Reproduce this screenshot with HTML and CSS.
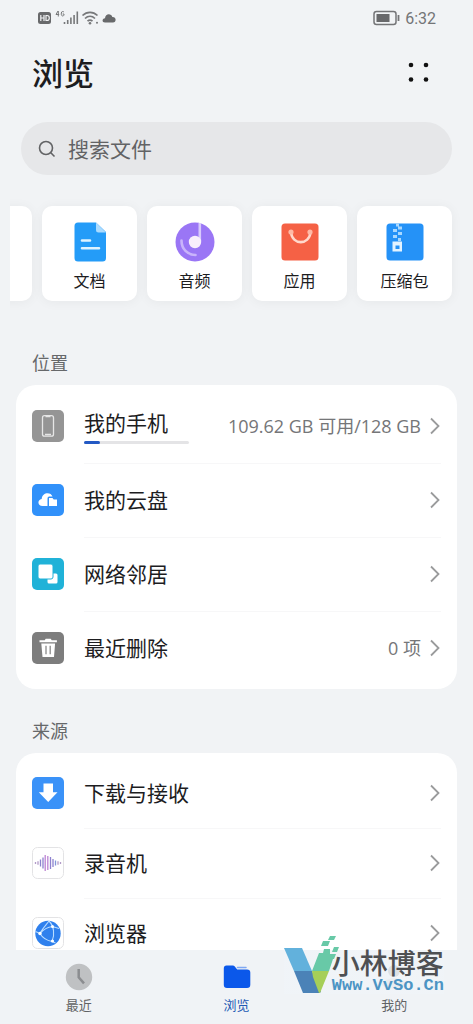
FILE: index.html
```html
<!DOCTYPE html>
<html lang="zh-CN">
<head>
<meta charset="utf-8">
<meta name="viewport" content="width=device-width, initial-scale=1">
<title>浏览</title>
<link rel="stylesheet" href="styles.css">
</head>
<body>
<svg class="defs" aria-hidden="true">
  <symbol id="chevron" viewBox="0 0 12 20"><path d="M2 2.500 9.500 10 2 17.500" fill="none" stroke="#9a9b9c" stroke-width="1.800"/></symbol>
</svg>
<div class="app">
  <main class="content">
    <div class="status">
      <div class="status-left">
        <svg width="80" height="18" viewBox="0 0 80 18" aria-hidden="true">
          <rect x="1" y="3" width="13" height="12" rx="2.500" fill="#68696b"/>
          <path d="M3.800 6v6M7 6v6M3.800 9H7M9 6.500v5h1c1.700 0 2.300-1 2.300-2.500S11.700 6.500 10 6.500z" fill="none" stroke="#f2f3f5" stroke-width="1.200"/>
          <path d="M21 2l-2 3.500h3.200M21.300 2v5.500M27 3.200c-.4-.8-2.500-1.200-2.700.8v1.500c.2 2 2.700 1.800 2.700.2V5h-1.300" fill="none" stroke="#77787a" stroke-width="1"/>
          <path d="M27.500 15v-2M30.700 15v-4M33.900 15V8.500M37.100 15V6M40.300 15V2.500" stroke="#77787a" stroke-width="1.600"/>
          <g fill="none" stroke="#77787a" stroke-width="1.700"><path d="M45.500 6.500c4.500-4.200 10.500-4.200 15 0M48 9.500c3-2.800 7-2.800 10 0M50.500 12.200c1.700-1.400 3.300-1.400 5 0"/></g>
          <circle cx="53" cy="14.300" r="1.300" fill="#77787a"/><circle cx="60" cy="13.700" r="1" fill="#77787a"/>
          <path d="M68 13.500c-3.200 0-3.200-4.200 0-4.300.3-5 6.500-5 7.300-1.200 4.300-.3 4.300 5.500.7 5.500z" fill="#68696b"/>
        </svg>
      </div>
      <div class="status-right">
        <svg width="28" height="16" viewBox="0 0 28 16" aria-hidden="true"><rect x="1" y="1.500" width="22" height="13" rx="2.500" fill="none" stroke="#747577" stroke-width="1.500"/><rect x="3.500" y="4" width="13" height="8" fill="#68696b"/><path d="M25.500 5v6" stroke="#747577" stroke-width="1.800"/></svg>
        <span>6:32</span>
      </div>
    </div>
    <header class="header">
      <h1>浏览</h1>
      <button class="more" aria-label="更多"><svg width="24" height="24" viewBox="0 0 24 24"><g fill="#111"><circle cx="5" cy="5" r="2.300"/><circle cx="20" cy="5" r="2.300"/><circle cx="5" cy="19.500" r="2.300"/><circle cx="20" cy="19.500" r="2.300"/></g></svg></button>
    </header>
    <label class="search">
      <svg width="18" height="18" viewBox="0 0 18 18" aria-hidden="true"><circle cx="8" cy="8" r="6.500" fill="none" stroke="#626365" stroke-width="1.600"/><path d="m12.800 12.800 3.700 3.700" stroke="#626365" stroke-width="1.600"/></svg>
      <input type="search" placeholder="搜索文件" aria-label="搜索文件">
    </label>
    <nav class="types" aria-label="文件类型">
      <button class="type" aria-label="视频"></button>
      <button class="type">
        <svg width="40" height="40" viewBox="0 0 40 40"><path d="M7 .500h19L36 10v26q0 3.500-3.500 3.500h-24.500Q4.500 39.500 4.500 36V4Q4.500.500 8 .500z" fill="#249cf8"/><path d="M26 .500V8q0 2.500 2.500 2.500H36z" fill="#aadbff"/><path d="M12 18.500h8M12 26.200h17" stroke="#dff3ff" stroke-width="2.600" stroke-linecap="round"/></svg>
        <span>文档</span>
      </button>
      <button class="type">
        <svg width="40" height="40" viewBox="0 0 40 40"><circle cx="20" cy="20" r="19.500" fill="#9a76f5"/><path d="M6.500 18.500c0 8.500 6 14.500 14 14.500" fill="none" stroke="#c9b4fb" stroke-width="2.600" stroke-linecap="round"/><path d="M24.800 1v18" stroke="#d8c9fc" stroke-width="2.600"/><circle cx="20" cy="20" r="6.200" fill="#f8effc"/></svg>
        <span>音频</span>
      </button>
      <button class="type">
        <svg width="40" height="40" viewBox="0 0 40 40"><rect x="1.500" y="1.500" width="37" height="37" rx="3.500" fill="#f56145"/><path d="M11 10c1 13.500 18.500 13.500 19.500 0" fill="none" stroke="#ffd8cb" stroke-width="2.600"/><circle cx="11" cy="10" r="2.600" fill="#ffb9a5"/><circle cx="30" cy="10" r="2.600" fill="#ffb9a5"/></svg>
        <span>应用</span>
      </button>
      <button class="type">
        <svg width="40" height="40" viewBox="0 0 40 40"><rect x="1.500" y="1.500" width="37" height="37" rx="3.500" fill="#2592f7"/><path d="M11 1.500h3v3h-3zM8 7h4v3H8zM13 4.500h4v3h-4zM13 10h4v3h-4zM8 13h4v3H8zM13 16h3v3h-3z" fill="#a9d8ff"/><path d="M7.500 19.500h9.500v10H7.500zm3 4v3.500h4v-3.500z" fill="#e3f3ff" fill-rule="evenodd"/></svg>
        <span>压缩包</span>
      </button>
    </nav>

    <h2>位置</h2>
    <ul class="list places">
      <li><a class="row" href="#phone">
        <svg class="icon" viewBox="0 0 32 32"><rect width="32" height="32" rx="5" fill="#959595"/><rect x="10.500" y="5.700" width="11" height="20.500" rx="2" fill="none" stroke="#e6e6e6" stroke-width="1.300"/><path d="M13.500 6.500h5M13 24.500h6" stroke="#e6e6e6" stroke-width="1.500"/></svg>
        <span class="name">我的手机<span class="meter"><span class="used"></span></span></span>
        <span class="value">109.62 GB 可用/128 GB</span>
        <svg class="chevron"><use href="#chevron"/></svg></a></li>
      <li><a class="row" href="#cloud">
        <svg class="icon" viewBox="0 0 32 32"><rect width="32" height="32" rx="5" fill="#3191fa"/><path d="M15.500 22h-5c-5 0-5.500-6.300-.8-7C10 8 19 7.500 20.500 12.500h-3.300q-1.700 0-1.700 1.700z" fill="#fff"/><path d="M17 14h3.500l1.200 1.500H25V22h-8z" fill="#fff"/></svg>
        <span class="name">我的云盘</span>
        <svg class="chevron"><use href="#chevron"/></svg></a></li>
      <li><a class="row" href="#network">
        <svg class="icon" viewBox="0 0 32 32"><rect width="32" height="32" rx="5" fill="#20b2d8"/><rect x="15.500" y="15.500" width="10" height="10" rx="1.500" fill="#fff"/><rect x="6" y="6" width="15" height="15" rx="2" fill="#fff" stroke="#20b2d8"/></svg>
        <span class="name">网络邻居</span>
        <svg class="chevron"><use href="#chevron"/></svg></a></li>
      <li><a class="row" href="#deleted">
        <svg class="icon" viewBox="0 0 32 32"><rect width="32" height="32" rx="5" fill="#7d7d7d"/><path d="M7.500 8.300h5.200l1-1.500h5l1 1.500h5.200v2H7.500zM9.300 11.500h13.800L22 25H10.500z" fill="#fff"/><path d="M14 13.800v8.500M18.200 13.800v8.500" stroke="#8b8b8b" stroke-width="1.300"/></svg>
        <span class="name">最近删除</span>
        <span class="value">0 项</span>
        <svg class="chevron"><use href="#chevron"/></svg></a></li>
    </ul>

    <h2>来源</h2>
    <ul class="list sources">
      <li><a class="row" href="#downloads">
        <svg class="icon" viewBox="0 0 32 32"><rect width="32" height="32" rx="5" fill="#3a92f8"/><path d="M11.500 6.500h9.500v8.700h4.500L16.200 25 6.800 15.200h4.700z" fill="#fff"/></svg>
        <span class="name">下载与接收</span>
        <svg class="chevron"><use href="#chevron"/></svg></a></li>
      <li><a class="row" href="#recorder">
        <svg class="icon" viewBox="0 0 32 32"><rect x=".5" y=".5" width="31" height="31" rx="5" fill="#fff" stroke="#e3e3e5"/><g stroke-width="1.300"><path d="M3.500 15v2M6 14.300v3.400M28.500 15v2M26 14.300v3.400" stroke="#b29bc8"/><path d="M8.500 12.500v7M11 10.500v11M18.500 10v12M21 12v8" stroke="#8d82cf"/><path d="M13.200 8v16M15.800 9v14" stroke="#bd83d3"/><path d="M23.500 13.500v5" stroke="#8297d8"/></g></svg>
        <span class="name">录音机</span>
        <svg class="chevron"><use href="#chevron"/></svg></a></li>
      <li><a class="row" href="#browser">
        <svg class="icon" viewBox="0 0 32 32"><rect x=".5" y=".5" width="31" height="31" rx="5" fill="#fff" stroke="#e3e3e5"/><circle cx="16" cy="16.500" r="12.700" fill="#2f80ed"/><g fill="none" stroke="#b9dcff" stroke-width="1.100"><path d="M17 4c-3 4-7 8-9 12.500 2 3.500 7 7 12 8M20.500 9.500C16 10 11 13 8 16.500M17 4c5 5 6 14 3 20.500M3.500 14.500l4.500 2M20.500 9.500l6.500 2M20 24.500l3.500 1.500"/></g><g fill="#fff"><circle cx="8" cy="16.500" r="1.700"/><circle cx="20.500" cy="9.500" r="1.500"/><circle cx="20.500" cy="24" r="1.600"/></g></svg>
        <span class="name">浏览器</span>
        <svg class="chevron"><use href="#chevron"/></svg></a></li>
    </ul>
  </main>

  <nav class="tabs" aria-label="主导航">
    <a class="tab" href="#recent">
      <svg width="28" height="28" viewBox="0 0 28 28"><circle cx="14" cy="14" r="13.200" fill="#bfc1c3"/><path d="M13.700 6v8.300l5.300 6" fill="none" stroke="#8b8d90" stroke-width="2.500"/></svg>
      <span>最近</span></a>
    <a class="tab active" href="#browse">
      <svg width="28" height="28" viewBox="0 0 28 28"><path d="M3.500 2.500h6.300q1.200 0 2 1l2.400 3H24q3.300 0 3.300 3v12.300q0 3.200-3.300 3.200H4q-3.200 0-3.200-3.200V5.500q0-3 2.700-3z" fill="#0b58ea"/><path d="M14.500 4.500H23" stroke="#7fa8f3" stroke-width="1.500" stroke-linecap="round"/></svg>
      <span>浏览</span></a>
    <a class="tab" href="#mine">
      <svg width="28" height="28" viewBox="0 0 28 28"><circle cx="14" cy="8" r="6" fill="#a3a5a8"/><path d="M2 22c2-9 22-9 24 0-5 5-19 5-24 0z" fill="#d5d7da"/></svg>
      <span>我的</span></a>
    <div class="watermark">
      <svg width="56" height="60" viewBox="0 0 56 60" aria-hidden="true">
        <path d="M0 14h18l10 23H10z" fill="#62b1dc"/><path d="M10 37h18l9 21-2 1H19z" fill="#4b82b7"/>
        <path d="M28 37h17L36 59h-1l-6-16z" fill="#a6cf58"/><path d="M28 37l7-18h4l1-4h6v5h6l-2 5h-1l-4 12z" fill="#68c9a7"/>
        <path d="M39 7h7l-2 5h-7zM46 2h6l-2 4h-6zM50 13h5l-2 5h-5z" fill="#68c9a7"/>
      </svg>
      <div class="mark-text"><span class="mark-name">小林博客</span><span class="mark-url">Www.VvSo.Cn</span></div>
    </div>
  </nav>
</div>
</body>
</html>
```
FILE: styles.css
```css
* { box-sizing: border-box; }

body {
  margin: 0;
  background: #f1f3f5;
  color: #1d1d1f;
  font-family: "Noto Sans CJK SC", sans-serif;
}

button {
  border: 0;
  padding: 0;
  font: inherit;
  color: inherit;
}

a { color: inherit; text-decoration: none; }

.defs { display: none; }

.app {
  display: flex;
  flex-direction: column;
  height: 100vh;
}

.content {
  flex: 1;
  min-height: 0;
  overflow: hidden;
}

.status {
  display: flex;
  justify-content: space-between;
  align-items: center;
  height: 36px;
  padding: 0 37px 0 37px;
  color: #747577;
  font-family: Roboto, sans-serif;
  font-size: 16px;
}

.status svg { display: block; }

.status-right {
  display: flex;
  align-items: center;
  gap: 4px;
}

.header {
  display: flex;
  justify-content: space-between;
  align-items: center;
  height: 72px;
  padding: 0 43px 0 32px;
}

h1 {
  margin: 0;
  font-size: 31px;
  font-weight: 500;
  line-height: 40px;
}

.more { background: none; }
.more svg { display: block; }

.search {
  display: flex;
  align-items: center;
  gap: 12px;
  height: 53px;
  margin: 14px 21px 0;
  padding: 0 17px;
  border-radius: 27px;
  background: #e6e7e9;
}

.search input {
  flex: 1;
  min-width: 0;
  padding: 0 0 2px;
  border: 0;
  outline: 0;
  background: none;
  color: #1d1d1f;
  font: inherit;
  font-size: 21px;
}

.search input::placeholder { color: #626365; opacity: 1; }

.types {
  display: flex;
  justify-content: flex-end;
  gap: 10px;
  margin: 14px 0 3px 10px;
  padding: 17px 21px 17px 0;
  overflow: hidden;
}

.type {
  display: flex;
  flex: 0 0 95px;
  flex-direction: column;
  align-items: center;
  gap: 6px;
  height: 95px;
  padding-top: 16px;
  border-radius: 10px;
  background: #fff;
  box-shadow: 0 1px 12px rgba(0, 0, 0, 0.05);
  font-size: 16px;
  line-height: 24px;
}

.type svg { flex: none; }

h2 {
  margin: 0;
  padding: 28px 32px 10px;
  color: #66686a;
  font-size: 18px;
  font-weight: 400;
  line-height: 26px;
}

.list {
  margin: 0 16px;
  padding: 4px 16px;
  border-radius: 20px;
  background: #fff;
  list-style: none;
}

.list li + li {
  background: linear-gradient(#f7f7f8, #f7f7f8) 52px 0 / 100% 1px no-repeat;
}

.row {
  display: grid;
  grid-template-columns: 32px 1fr auto 12px;
  align-items: center;
  height: 74px;
}

.sources { padding: 5px 16px; }
.sources .row { height: 70px; }

.icon { width: 32px; height: 32px; }

.name {
  padding: 0 0 2px 20px;
  font-size: 21px;
  line-height: 30px;
}

.meter {
  display: block;
  width: 105px;
  height: 3px;
  margin-top: 4px;
  border-radius: 2px;
  background: #e4e4e6;
}

.used {
  display: block;
  width: 15%;
  height: 3px;
  border-radius: 2px;
  background: #2359c4;
}

.value {
  grid-column: 3;
  padding-right: 8px;
  color: #757678;
  font-family: "Open Sans", "Noto Sans CJK SC", sans-serif;
  font-size: 18px;
  line-height: 28px;
}

.chevron {
  grid-column: 4;
  width: 12px;
  height: 20px;
}

.tabs {
  position: relative;
  display: flex;
  flex: none;
  height: 74px;
  background: #f0f3f6;
}

.tab {
  display: flex;
  flex: 1;
  flex-direction: column;
  align-items: center;
  gap: 3px;
  padding-top: 13px;
  color: #606264;
  font-size: 13px;
  line-height: 22px;
}

.tab.active { color: #2359b4; }

/* Site mark laid over the tab bar */
.watermark {
  position: absolute;
  right: 29px;
  bottom: 30px;
  display: flex;
  align-items: flex-end;
  background: linear-gradient(transparent 16px, rgba(240, 244, 248, 0.75) 16px);
}

.watermark svg { display: block; }

.mark-text {
  display: flex;
  flex-direction: column;
  margin-left: -8px;
}

.mark-name {
  color: #4e5053;
  font-size: 28px;
  font-weight: 500;
  line-height: 32px;
}

.mark-url {
  color: #4c94c4;
  font-family: "Liberation Mono", monospace;
  font-size: 17px;
  font-weight: 700;
  line-height: 16px;
}
```
